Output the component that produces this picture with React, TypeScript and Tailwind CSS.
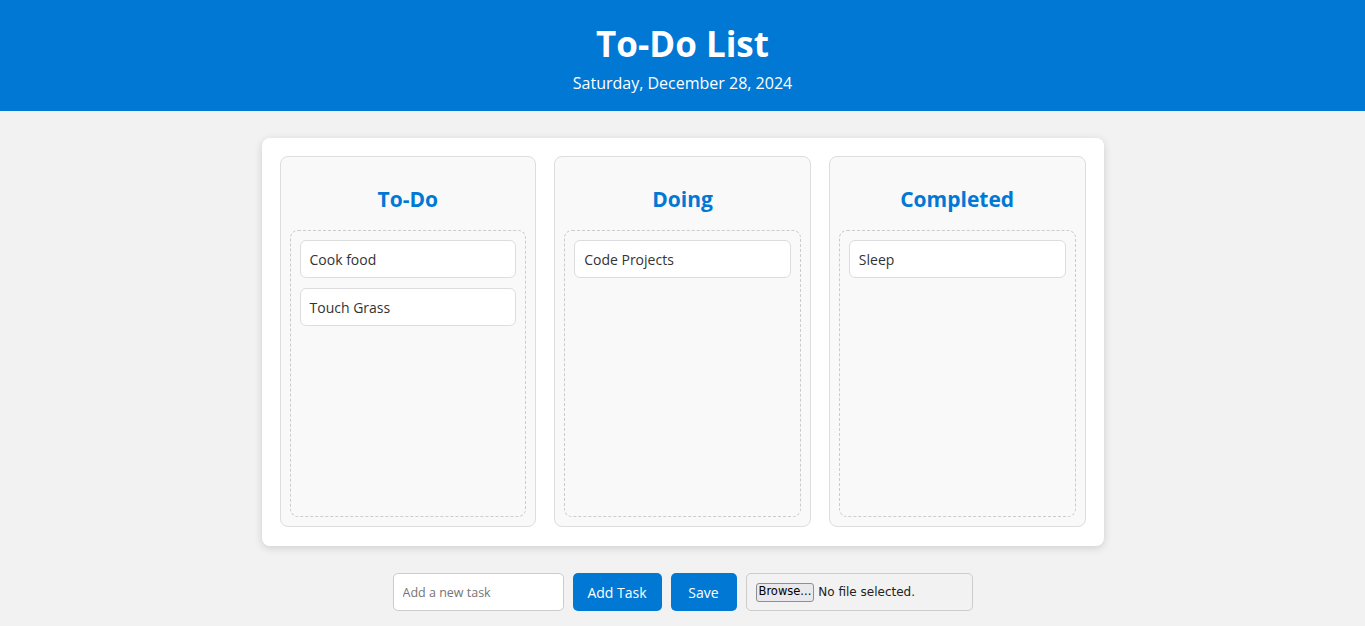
import React from "react";

const font = { fontFamily: '"Open Sans", "Noto Sans", sans-serif' };

function Task({ text }: { text: string }) {
  return (
    <div className="h-[38px] bg-white border border-[#dddddd] rounded-[6px] px-[9px] flex items-center text-[14px] text-[#333333]">
      {text}
    </div>
  );
}

function Column({ title, tasks }: { title: string; tasks: string[] }) {
  return (
    <div className="flex-1 basis-0 min-w-0 bg-[#f9f9f9] border border-[#dddddd] rounded-[8px] px-[9px] pb-[9px] flex flex-col">
      <h2 className="h-[73px] flex items-end justify-center pb-[20px] text-[21px] font-bold text-[#0078d4] leading-none">
        {title}
      </h2>
      <div className="flex-1 border border-dashed border-[#cccccc] rounded-[8px] p-[9px] flex flex-col gap-[10px]">
        {tasks.map((t) => (
          <Task key={t} text={t} />
        ))}
      </div>
    </div>
  );
}

export default function App() {
  return (
    <div className="min-h-[626px] bg-[#f2f2f2] flex flex-col" style={font}>
      <header className="h-[111px] bg-[#0078d4] text-white flex flex-col items-center pt-[22px]">
        <h1 className="text-[35px] font-bold leading-[44px]">To-Do List</h1>
        <p className="text-[16px] leading-[24px] mt-[5px]">Saturday, December 28, 2024</p>
      </header>
      <main className="flex flex-col items-center pt-[27px]">
        <div className="w-[842px] h-[408px] bg-white rounded-[8px] shadow-[0_2px_8px_rgba(0,0,0,0.15)] p-[18px] pb-[19px] flex gap-[18px]">
          <Column title="To-Do" tasks={["Cook food", "Touch Grass"]} />
          <Column title="Doing" tasks={["Code Projects"]} />
          <Column title="Completed" tasks={["Sleep"]} />
        </div>
        <div className="mt-[27px] flex gap-[9px] items-center">
          <input
            className="w-[171px] h-[38px] bg-white border border-[#cccccc] rounded-[5px] px-[9px] text-[12.5px] text-[#333] placeholder:text-[#757575] outline-none"
            placeholder="Add a new task"
            style={font}
          />
          <button className="w-[89px] h-[38px] bg-[#0078d4] text-white rounded-[5px] text-[14px]">Add Task</button>
          <button className="w-[66px] h-[38px] bg-[#0078d4] text-white rounded-[5px] text-[14px]">Save</button>
          <div className="w-[227px] h-[38px] bg-[#f2f2f2] border border-[#cccccc] rounded-[5px] pl-[9px] flex items-center gap-[4px] text-[13px] text-[#222]" style={{ fontFamily: '"DejaVu Sans", sans-serif' }}>
            <span className="h-[19px] px-[2px] border border-[#8f8f8f] rounded-[3px] bg-[#e9e9ed] flex items-center text-[11.5px] text-black">Browse...</span>
            <span className="text-[12px]">No file selected.</span>
          </div>
        </div>
      </main>
    </div>
  );
}
